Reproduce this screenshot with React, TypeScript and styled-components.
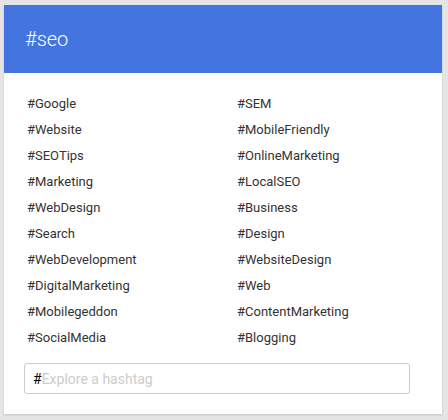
import React from 'react';
import styled, { createGlobalStyle } from 'styled-components';

const GlobalStyle = createGlobalStyle`
  html, body {
    margin: 0;
    padding: 0;
    background: #e5e5e5;
    font-family: Roboto, "Liberation Sans", sans-serif;
  }
`;

const Page = styled.div`
  padding: 5px 6px 6px 4px;
`;

const Card = styled.section`
  background: #fff;
  box-shadow: 0 1px 2px rgba(0, 0, 0, 0.15);
`;

const Header = styled.header`
  height: 68px;
  background: #4374e0;
  display: flex;
  align-items: center;
  padding: 0 21px;
  color: #fff;
  font-size: 20px;
  font-weight: 300;
`;

const Body = styled.div`
  padding: 18px 32px 20px 20px;
`;

const TagGrid = styled.ul`
  list-style: none;
  margin: 0 0 12px;
  padding: 0 0 0 3px;
  display: grid;
  grid-template-columns: 210px 1fr;
`;

const Tag = styled.li`
  font-size: 13px;
  line-height: 26px;
  color: #333;
`;

const SearchBox = styled.label`
  display: flex;
  align-items: center;
  height: 31px;
  box-sizing: border-box;
  border: 1px solid #ccc;
  border-radius: 3px;
  padding: 0 8px;
  font-size: 14px;
`;

const Hash = styled.span`
  color: #000;
`;

const SearchInput = styled.input`
  flex: 1;
  border: 0;
  outline: none;
  padding: 0;
  font: inherit;
  color: #333;
  background: transparent;

  &::placeholder {
    color: #ccc;
  }
`;

const tags = [
  'Google', 'SEM',
  'Website', 'MobileFriendly',
  'SEOTips', 'OnlineMarketing',
  'Marketing', 'LocalSEO',
  'WebDesign', 'Business',
  'Search', 'Design',
  'WebDevelopment', 'WebsiteDesign',
  'DigitalMarketing', 'Web',
  'Mobilegeddon', 'ContentMarketing',
  'SocialMedia', 'Blogging',
];

export default function App() {
  return (
    <>
      <GlobalStyle />
      <Page>
        <Card>
          <Header>#seo</Header>
          <Body>
            <TagGrid>
              {tags.map((t) => (
                <Tag key={t}>#{t}</Tag>
              ))}
            </TagGrid>
            <SearchBox>
              <Hash>#</Hash>
              <SearchInput placeholder="Explore a hashtag" />
            </SearchBox>
          </Body>
        </Card>
      </Page>
    </>
  );
}
